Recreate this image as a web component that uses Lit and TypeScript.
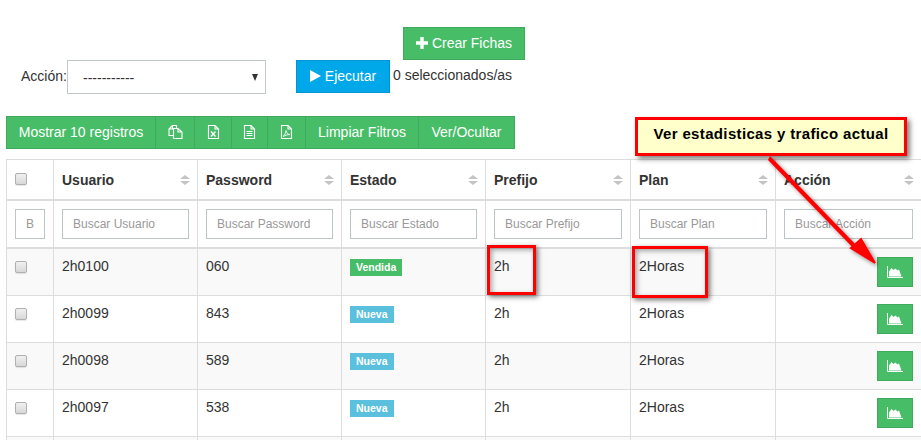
import { LitElement, html, css, svg } from "lit";
import { customElement } from "lit/decorators.js";

const rows = [
  { u: "2h0100", p: "060", e: "Vendida" },
  { u: "2h0099", p: "843", e: "Nueva" },
  { u: "2h0098", p: "589", e: "Nueva" },
  { u: "2h0097", p: "538", e: "Nueva" },
];
const filters = ["Usuario", "Password", "Estado", "Prefijo", "Plan", "Acción"];

const fileShape = svg`<path d="M1.5 .5H8L11.5 4V13.5H1.5Z M8 .5V4H11.5" fill="none" stroke="#fff" stroke-width="1.1"/>`;
const icons = {
  copy: html`<svg width="15" height="14" viewBox="0 0 15 14"><path d="M4.5 .5H8.5V3.5M4.5 .5L1 4V10.5H5.5M1 4H4.5V.5" fill="none" stroke="#fff" stroke-width="1.1"/><path d="M5.5 3.5H10L14 7V13.5H5.5ZM10 3.5V7H14" fill="none" stroke="#fff" stroke-width="1.1"/></svg>`,
  xls: html`<svg width="13" height="14" viewBox="0 0 13 14">${fileShape}<path d="M4 6.5L8.5 11.5M8.5 6.5L4 11.5" stroke="#fff" stroke-width="1.3"/></svg>`,
  csv: html`<svg width="13" height="14" viewBox="0 0 13 14">${fileShape}<path d="M3.5 6.5H9.5M3.5 8.5H9.5M3.5 10.5H9.5" stroke="#fff" stroke-width="1"/></svg>`,
  pdf: html`<svg width="13" height="14" viewBox="0 0 13 14">${fileShape}<path d="M3 11.5C5 10 6 7.5 6 5.5C6.5 8 8 9.5 10 9.5C7.5 9.5 5 10.5 3 11.5Z" fill="none" stroke="#fff" stroke-width=".9"/></svg>`,
  chart: html`<svg width="16" height="12" viewBox="0 0 16 12"><path d="M.5 0V11.5H16" fill="none" stroke="#fff" stroke-width="1"/><path d="M2 10.5V5.5L4.5 2L6.5 4L8.5 2.5L10.5 4.5L12 3.5L14.5 10.5Z" fill="#fff"/></svg>`,
};

@customElement("app-root")
export class AppRoot extends LitElement {
  static styles = css`
    :host {
      display: block;
      position: relative;
      width: 921px;
      height: 440px;
      overflow: hidden;
      background: #fff;
      font-family: "Liberation Sans", Arial, sans-serif;
      font-size: 14px;
      line-height: 20px;
      color: #333;
    }
    * { box-sizing: border-box; }
    .page { padding: 27px 0 0 6px; }
    .btn {
      display: inline-flex;
      align-items: center;
      justify-content: center;
      height: 33px;
      border: 1px solid #3fa95c;
      background: #48bd68;
      color: #fff;
      font: inherit;
      padding: 0 0 2px;
    }
    .create { margin-left: 397px; width: 122px; gap: 4px; }
    .action {
      display: flex;
      align-items: flex-start;
      height: 56px;
      padding-left: 15px;
    }
    .label { width: 46px; padding-top: 6px; }
    .select-wrap { position: relative; width: 199px; height: 34px; }
    select {
      appearance: none;
      width: 100%;
      height: 100%;
      border: 1px solid #c2c8c8;
      border-radius: 0;
      background: #fff;
      color: #333;
      font: inherit;
      padding: 1px 0 0 15px;
    }
    .caret {
      position: absolute;
      right: 8px;
      top: 14px;
      width: 0;
      height: 0;
      border-left: 3px solid transparent;
      border-right: 3px solid transparent;
      border-top: 7px solid #333;
    }
    .run {
      margin-left: 30px;
      width: 94px;
      gap: 4px;
      background: #00a8ea;
      border-color: #0095d0;
    }
    .selected { margin-left: 3px; padding-top: 5px; }
    .toolbar { display: flex; height: 33px; }
    .toolbar .btn { margin-left: -1px; }
    .toolbar .btn:first-child { margin-left: 0; }
    .w-main { width: 150px; }
    .w-copy { width: 40px; }
    .w-xls { width: 38px; }
    .w-csv { width: 37px; }
    .w-pdf { width: 39px; }
    .w-clear { width: 114px; }
    .w-vis { width: 97px; }
    table {
      table-layout: fixed;
      border-collapse: collapse;
      width: 915px;
      margin-top: 10px;
    }
    th, td { border: 1px solid #ddd; padding: 8px; vertical-align: top; text-align: left; }
    thead tr:first-child th {
      height: 40px;
      border-bottom-width: 2px;
      padding-top: 10px;
      font-weight: 700;
      color: #333;
    }
    .head { display: flex; justify-content: space-between; align-items: center; }
    .sort { display: flex; flex-direction: column; gap: 2px; margin-right: -1px; }
    .up, .down { width: 0; height: 0; border-left: 5px solid transparent; border-right: 5px solid transparent; }
    .up { border-bottom: 4px solid #c4c4c4; }
    .down { border-top: 4px solid #c4c4c4; }
    .filter td { height: 48px; border-bottom-width: 2px; padding: 8px 8px 0; }
    .filter input {
      display: block;
      width: 100%;
      height: 30px;
      border: 1px solid #bdc6c6;
      border-radius: 0;
      padding: 0 10px;
      font: 12px/20px "Liberation Sans", Arial, sans-serif;
      color: #555;
      background: #fff;
    }
    .filter input::placeholder { color: #999; opacity: 1; }
    tbody tr.row td { height: 47px; padding: 7px 8px 0; }
    tbody tr.row:first-child td { height: 48px; }
    tbody tr.row:nth-child(odd) td { background: #f9f9f9; }
    .check {
      appearance: none;
      display: block;
      width: 12px;
      height: 12px;
      margin: 5px 0 0 0;
      border: 1px solid #b0b0b0;
      border-radius: 2px;
      background: linear-gradient(#f0f0f0, #d8d8d8);
      box-shadow: 0 1px 1px rgba(0,0,0,.1);
    }
    thead .check { margin-top: 3px; margin-left: 0; }
    .badge {
      display: inline-block;
      height: 17px;
      margin-top: 3px;
      padding: 0 6px;
      color: #fff;
      font: 700 10.5px/17px "Liberation Sans", Arial, sans-serif;
      vertical-align: top;
    }
    .vendida { background: #48bd68; }
    .nueva { background: #5bc0de; }
    .right { display: flex; justify-content: flex-end; }
    .stat { width: 36px; height: 30px; margin-top: 1px; padding: 0; }
    .note {
      position: absolute;
      left: 635px;
      top: 117px;
      width: 272px;
      height: 39px;
      border: 3px solid #f00;
      background: #ffffcc;
      color: #000;
      font: 700 15px/28px "Liberation Sans", Arial, sans-serif;
      text-align: center;
      letter-spacing: .35px;
      box-shadow: 3px 3px 5px rgba(0,0,0,.5);
    }
    .mark {
      position: absolute;
      border: 3px solid #f00;
      box-shadow: 2px 2px 5px rgba(0,0,0,.55), inset 2px 2px 5px rgba(0,0,0,.35);
    }
    .mark-a { left: 487px; top: 245px; width: 49px; height: 50px; }
    .mark-b { left: 632px; top: 246px; width: 76px; height: 52px; }
    .arrow { position: absolute; left: 0; top: 0; pointer-events: none; }
  `;

  render() {
    return html`
      <div class="page">
        <button class="btn create">
          <svg width="12" height="12" viewBox="0 0 12 12"><path d="M4.3 0H7.7V4.3H12V7.7H7.7V12H4.3V7.7H0V4.3H4.3Z" fill="#fff"/></svg>
          Crear Fichas
        </button>
        <div class="action">
          <span class="label">Acción:</span>
          <div class="select-wrap">
            <select><option>-----------</option></select>
            <span class="caret"></span>
          </div>
          <button class="btn run">
            <svg width="11" height="12" viewBox="0 0 11 12"><path d="M0 0L11 6L0 12Z" fill="#fff"/></svg>
            Ejecutar
          </button>
          <span class="selected">0 seleccionados/as</span>
        </div>
        <div class="toolbar">
          <button class="btn w-main">Mostrar 10 registros</button>
          <button class="btn w-copy">${icons.copy}</button>
          <button class="btn w-xls">${icons.xls}</button>
          <button class="btn w-csv">${icons.csv}</button>
          <button class="btn w-pdf">${icons.pdf}</button>
          <button class="btn w-clear">Limpiar Filtros</button>
          <button class="btn w-vis">Ver/Ocultar</button>
        </div>
        <table>
          <colgroup>
            <col style="width:47px" /><col style="width:144px" /><col style="width:144px" />
            <col style="width:144px" /><col style="width:145px" /><col style="width:145px" /><col style="width:146px" />
          </colgroup>
          <thead>
            <tr>
              <th><input class="check" type="checkbox" /></th>
              ${filters.map(
                (f) => html`<th><div class="head">${f}<span class="sort"><span class="up"></span><span class="down"></span></span></div></th>`
              )}
            </tr>
            <tr class="filter">
              <td><input placeholder="B" /></td>
              ${filters.map((f) => html`<td><input placeholder="Buscar ${f}" /></td>`)}
            </tr>
          </thead>
          <tbody>
            ${rows.map(
              (r) => html`<tr class="row">
                <td><input class="check" type="checkbox" /></td>
                <td>${r.u}</td>
                <td>${r.p}</td>
                <td><span class="badge ${r.e === "Vendida" ? "vendida" : "nueva"}">${r.e}</span></td>
                <td>2h</td>
                <td>2Horas</td>
                <td><div class="right"><button class="btn stat">${icons.chart}</button></div></td>
              </tr>`
            )}
            <tr class="row"><td></td><td></td><td></td><td></td><td></td><td></td><td></td></tr>
          </tbody>
        </table>
      </div>
      <div class="mark mark-a"></div>
      <div class="mark mark-b"></div>
      <div class="note">Ver estadisticas y trafico actual</div>
      <svg class="arrow" width="921" height="440" viewBox="0 0 921 440">
        <defs>
          <filter id="sh" x="-20%" y="-20%" width="140%" height="140%">
            <feDropShadow dx="2" dy="2" stdDeviation="2" flood-color="#000" flood-opacity=".45" />
          </filter>
        </defs>
        <g filter="url(#sh)" fill="#f00">
          <path d="M770 156L772 158L861 250L858 253L768 160Z" />
          <path d="M875 263L851 248L861 239Z" stroke="#f00" stroke-width="2" />
        </g>
      </svg>
    `;
  }
}
